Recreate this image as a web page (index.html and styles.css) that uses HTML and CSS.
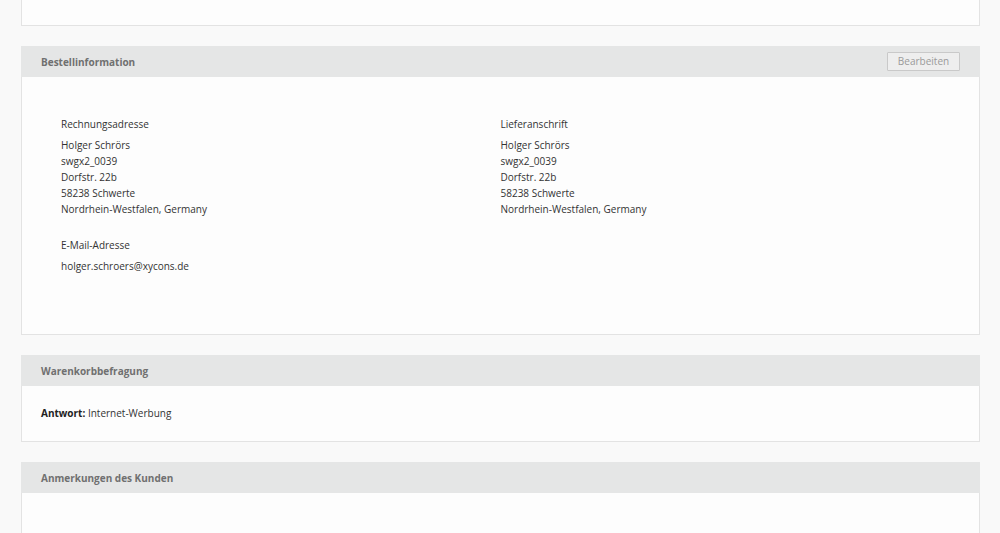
FILE: index.html
```html
<!DOCTYPE html>
<html lang="de">
<head>
<meta charset="utf-8">
<title>Bestellung</title>
<link rel="stylesheet" href="styles.css">
</head>
<body>
<div class="page">
  <div class="panel panel-top"></div>

  <div class="panel">
    <div class="panel-head">
      <span class="panel-title">Bestellinformation</span>
      <button class="btn">Bearbeiten</button>
    </div>
    <div class="panel-body info-body">
      <div class="col">
        <div class="label">Rechnungsadresse</div>
        <div class="addr">
          <div>Holger Schrörs</div>
          <div>swgx2_0039</div>
          <div>Dorfstr. 22b</div>
          <div>58238 Schwerte</div>
          <div>Nordrhein-Westfalen, Germany</div>
        </div>
        <div class="label label-mail">E-Mail-Adresse</div>
        <div class="addr">holger.schroers@xycons.de</div>
      </div>
      <div class="col">
        <div class="label">Lieferanschrift</div>
        <div class="addr">
          <div>Holger Schrörs</div>
          <div>swgx2_0039</div>
          <div>Dorfstr. 22b</div>
          <div>58238 Schwerte</div>
          <div>Nordrhein-Westfalen, Germany</div>
        </div>
      </div>
    </div>
  </div>

  <div class="panel">
    <div class="panel-head">
      <span class="panel-title">Warenkorbbefragung</span>
    </div>
    <div class="panel-body survey-body">
      <strong>Antwort:</strong> Internet-Werbung
    </div>
  </div>

  <div class="panel">
    <div class="panel-head">
      <span class="panel-title">Anmerkungen des Kunden</span>
    </div>
    <div class="panel-body notes-body"></div>
  </div>
</div>
</body>
</html>
```

FILE: styles.css
```css
* { box-sizing: border-box; }
html, body {
  margin: 0;
  padding: 0;
  background: #f9f9f9;
  height: 533px;
  overflow: hidden;
}
body {
  font-family: "Open Sans", "Liberation Sans", sans-serif;
  font-size: 10px;
  line-height: 16px;
  color: #333;
}
.page {
  padding: 0 20px 0 21px;
  display: flex;
  flex-direction: column;
  gap: 20px;
}
.panel {
  background: #fdfdfd;
  border: 1px solid #e3e3e3;
}
.panel-top {
  border-top: none;
  height: 26px;
}
.panel-head {
  background: #e5e6e6;
  height: 31px;
  display: flex;
  align-items: center;
  justify-content: space-between;
  padding: 0 20px 0 20px;
  margin: -1px -1px 0 -1px;
}
.panel-title {
  font-weight: 700;
  color: #707070;
  font-size: 10px;
}
.btn {
  font-family: inherit;
  font-size: 10px;
  color: #9a9a9a;
  background: #eeeeee;
  border: 1px solid #c9c9c9;
  border-radius: 1px;
  height: 19px;
  width: 73px;
  padding: 0;
  line-height: 17px;
  cursor: pointer;
}
.info-body {
  display: grid;
  grid-template-columns: 1fr 1fr;
  padding: 39px 39px 60px 39px;
}
.label {
  margin-bottom: 5px;
}
.label-mail {
  margin-top: 20px;
}
.survey-body {
  padding: 19px 19px 20px 19px;
}
.survey-body strong {
  font-weight: 700;
  color: #222;
}
.notes-body {
  height: 40px;
}
```
